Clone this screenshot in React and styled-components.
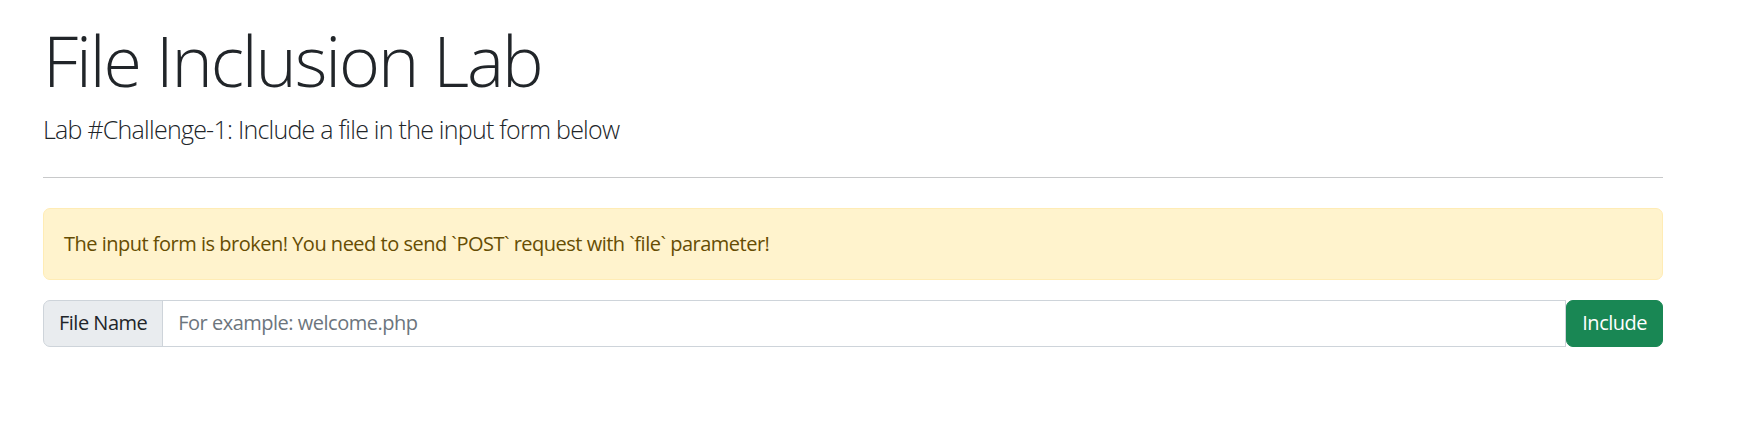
import styled, { createGlobalStyle } from 'styled-components';

const GlobalStyle = createGlobalStyle`
  * { box-sizing: border-box; }
  body {
    margin: 0;
    background: #fff;
    color: #212529;
    font-family: "Open Sans", "Noto Sans", sans-serif;
    font-size: 20px;
    line-height: 1.5;
    letter-spacing: -0.5px;
  }
`;

const Page = styled.div`
  padding: 18px 80px 40px 43px;
`;

const Title = styled.h1`
  margin: 0;
  font-size: 70px;
  font-weight: 300;
  line-height: 1.2;
  letter-spacing: -2.1px;
  color: #212529;
`;

const Lead = styled.p`
  margin: 9px 0 0;
  font-size: 25px;
  font-weight: 300;
  letter-spacing: -0.75px;
  color: #212529;
`;

const Rule = styled.hr`
  margin: 28px 0 30px;
  border: 0;
  border-top: 1px solid #c8c9ca;
`;

const Alert = styled.div`
  padding: 20px;
  margin-bottom: 20px;
  background: #fff3cd;
  border: 1px solid #ffecb5;
  border-radius: 7px;
  color: #664d03;
  font-size: 20px;
  line-height: 30px;
`;

const InputGroup = styled.form`
  display: flex;
  align-items: stretch;
  width: 100%;
`;

const Addon = styled.span`
  display: flex;
  align-items: center;
  padding: 7.5px 15px;
  background: #e9ecef;
  border: 1px solid #ced4da;
  border-radius: 7px 0 0 7px;
  color: #212529;
  font-size: 20px;
  line-height: 30px;
  white-space: nowrap;
`;

const Field = styled.input`
  flex: 1;
  min-width: 0;
  margin-left: -1px;
  padding: 7.5px 15px;
  border: 1px solid #ced4da;
  border-radius: 0;
  font-family: inherit;
  font-size: 20px;
  line-height: 30px;
  letter-spacing: inherit;
  color: #212529;
  outline: none;

  &::placeholder {
    color: #6c757d;
  }
`;

const Button = styled.button`
  padding: 7.5px 15px;
  background: #198754;
  border: 1px solid #198754;
  border-radius: 7px;
  color: #fff;
  font-family: inherit;
  font-size: 20px;
  line-height: 30px;
  letter-spacing: inherit;
  cursor: pointer;
`;

export default function App() {
  return (
    <>
      <GlobalStyle />
      <Page>
        <Title>File Inclusion Lab</Title>
        <Lead>Lab #Challenge-1: Include a file in the input form below</Lead>
        <Rule />
        <Alert>The input form is broken! You need to send `POST` request with `file` parameter!</Alert>
        <InputGroup onSubmit={(e) => e.preventDefault()}>
          <Addon>File Name</Addon>
          <Field type="text" name="file" placeholder="For example: welcome.php" />
          <Button type="submit">Include</Button>
        </InputGroup>
      </Page>
    </>
  );
}
